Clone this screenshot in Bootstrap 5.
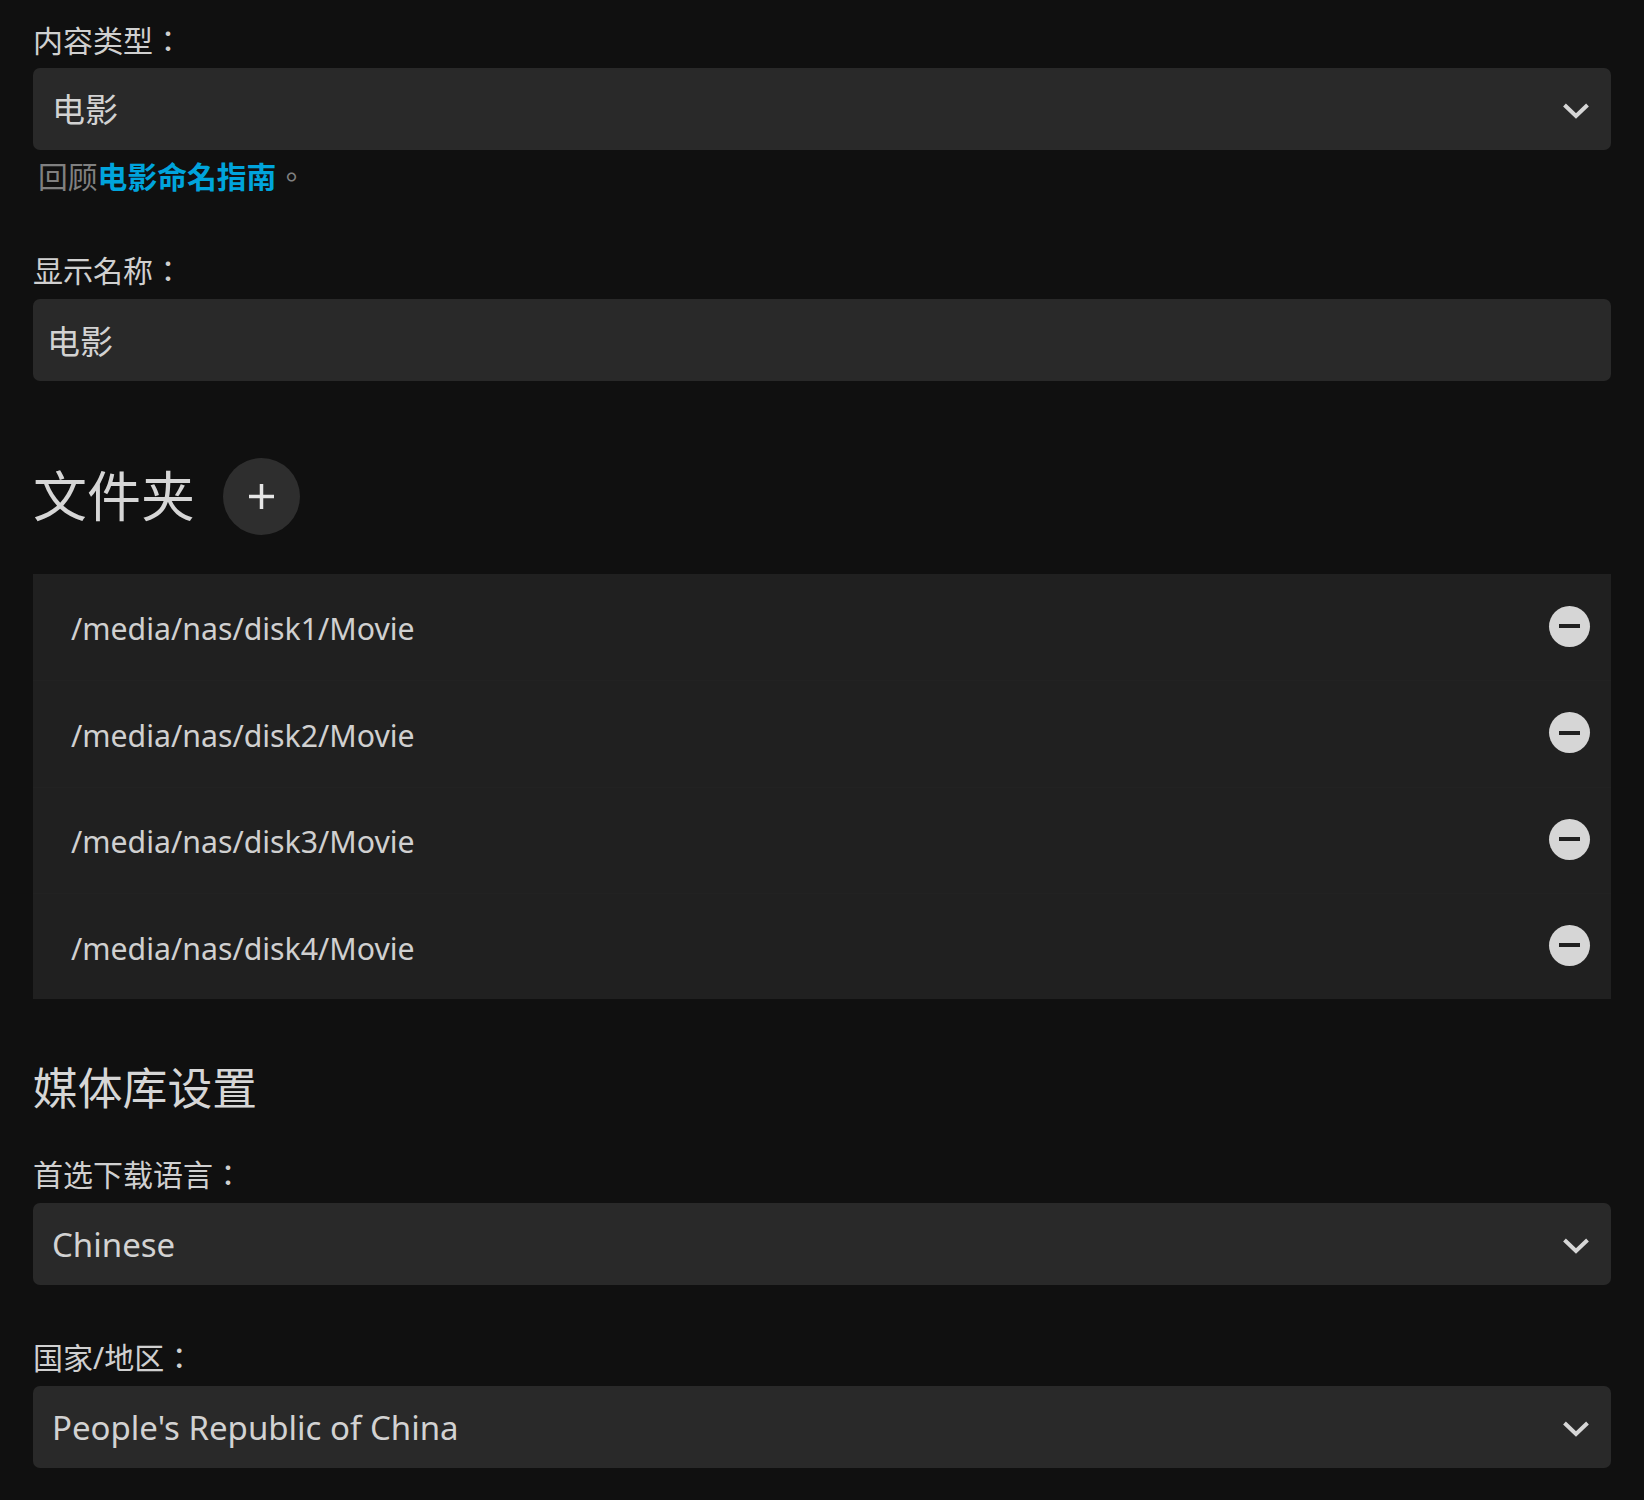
<!DOCTYPE html>
<html lang="en">
<head>
    <meta charset="UTF-8">
    <meta name="viewport" content="width=device-width, initial-scale=1.0">
    <title>媒体库</title>
    <link href="https://cdn.jsdelivr.net/npm/bootstrap@5.3.0/dist/css/bootstrap.min.css" rel="stylesheet">
    <style>
        body {
            background: #101010;
            color: #d6d6d6;
            font-family: "Noto Sans", "Noto Sans CJK TC", sans-serif;
        }
        .page-wrap { padding: 23px 33px 0; }
        .field-label { font-size: 30px; line-height: 36px; margin-bottom: 10px; color: #d0d0d0; }
        .field-label.first-label { margin-bottom: 9px; }
        .field-label.spaced { margin-top: 58px; }
        .field-label.spaced-sm { margin-top: 55px; }
        .field-box {
            background-color: #292929;
            color: #d2d2d2;
            border: 0;
            border-radius: 7px;
            font-size: 33px;
            height: 82px;
            line-height: 1.4;
            box-shadow: none;
        }
        .field-box:focus { background-color: #292929; color: #d2d2d2; box-shadow: none; }
        select.field-box {
            padding: 2px 60px 0 19px;
            background-image: url("data:image/svg+xml,%3csvg xmlns='http://www.w3.org/2000/svg' viewBox='0 0 26 16'%3e%3cpath fill='none' stroke='%23d6d6d6' stroke-width='4' d='M1.5 2l11.5 11L24.500 2'/%3e%3c/svg%3e");
            background-position: right 22px top calc(50% + 2px);
            background-size: 26px 16px;
        }
        input.field-box { padding: 0 14px; }
        .help-line { font-size: 29.800px; line-height: 36px; margin: 9px 0 0 5px; color: #808080; }
        .help-line a { color: #00a4dc; font-weight: 700; text-decoration: none; }
        .folder-head { gap: 28px; margin-top: 77px; margin-bottom: 39px; }
        .folder-title { font-size: 54px; line-height: 77px; font-weight: 400; margin: 0; }
        .round-add {
            width: 77px;
            height: 77px;
            background: #2e2e2e;
            border: 0;
        }
        .folder-list { background: #202020; }
        .folder-row {
            height: 106.250px;
            padding: 0 21px 0 38px;
            font-size: 30.250px;
        }
        .folder-row + .folder-row { border-top: 1px solid #222; }
        .folder-path { color: #d0d0d0; padding-top: 4px; }
        .row-remove {
            width: 41px;
            height: 41px;
            background: #d6d6d6;
            border: 0;
            margin-top: -2px;
        }
        .section-title { font-size: 44.800px; line-height: 56px; font-weight: 400; margin: 61px 0 41px; }
    </style>
</head>
<body>
    <div class="page-wrap">
        <div class="field-label first-label">内容类型：</div>
        <select class="form-select field-box">
            <option>电影</option>
        </select>
        <div class="help-line">回顾<a href="#">电影命名指南</a>。</div>

        <div class="field-label spaced">显示名称：</div>
        <input type="text" class="form-control field-box" value="电影">

        <div class="d-flex align-items-center folder-head">
            <h1 class="folder-title">文件夹</h1>
            <button type="button" class="btn rounded-circle p-0 d-flex align-items-center justify-content-center round-add" aria-label="添加">
                <svg width="25" height="25" viewBox="0 0 25 25"><path d="M12.500 0v25M0 12.500h25" stroke="#e6e6e6" stroke-width="3.500" fill="none"/></svg>
            </button>
        </div>

        <div class="folder-list">
            <div class="folder-row d-flex align-items-center justify-content-between">
                <span class="folder-path">/media/nas/disk1/Movie</span>
                <button type="button" class="btn rounded-circle p-0 d-flex align-items-center justify-content-center row-remove" aria-label="删除">
                    <svg width="21" height="4" viewBox="0 0 21 4"><rect width="21" height="4" fill="#202020"/></svg>
                </button>
            </div>
            <div class="folder-row d-flex align-items-center justify-content-between">
                <span class="folder-path">/media/nas/disk2/Movie</span>
                <button type="button" class="btn rounded-circle p-0 d-flex align-items-center justify-content-center row-remove" aria-label="删除">
                    <svg width="21" height="4" viewBox="0 0 21 4"><rect width="21" height="4" fill="#202020"/></svg>
                </button>
            </div>
            <div class="folder-row d-flex align-items-center justify-content-between">
                <span class="folder-path">/media/nas/disk3/Movie</span>
                <button type="button" class="btn rounded-circle p-0 d-flex align-items-center justify-content-center row-remove" aria-label="删除">
                    <svg width="21" height="4" viewBox="0 0 21 4"><rect width="21" height="4" fill="#202020"/></svg>
                </button>
            </div>
            <div class="folder-row d-flex align-items-center justify-content-between">
                <span class="folder-path">/media/nas/disk4/Movie</span>
                <button type="button" class="btn rounded-circle p-0 d-flex align-items-center justify-content-center row-remove" aria-label="删除">
                    <svg width="21" height="4" viewBox="0 0 21 4"><rect width="21" height="4" fill="#202020"/></svg>
                </button>
            </div>
        </div>

        <h2 class="section-title">媒体库设置</h2>

        <div class="field-label">首选下载语言：</div>
        <select class="form-select field-box">
            <option>Chinese</option>
        </select>

        <div class="field-label spaced-sm">国家/地区：</div>
        <select class="form-select field-box">
            <option>People's Republic of China</option>
        </select>
    </div>
    <script src="https://cdn.jsdelivr.net/npm/bootstrap@5.3.0/dist/js/bootstrap.bundle.min.js"></script>
</body>
</html>
